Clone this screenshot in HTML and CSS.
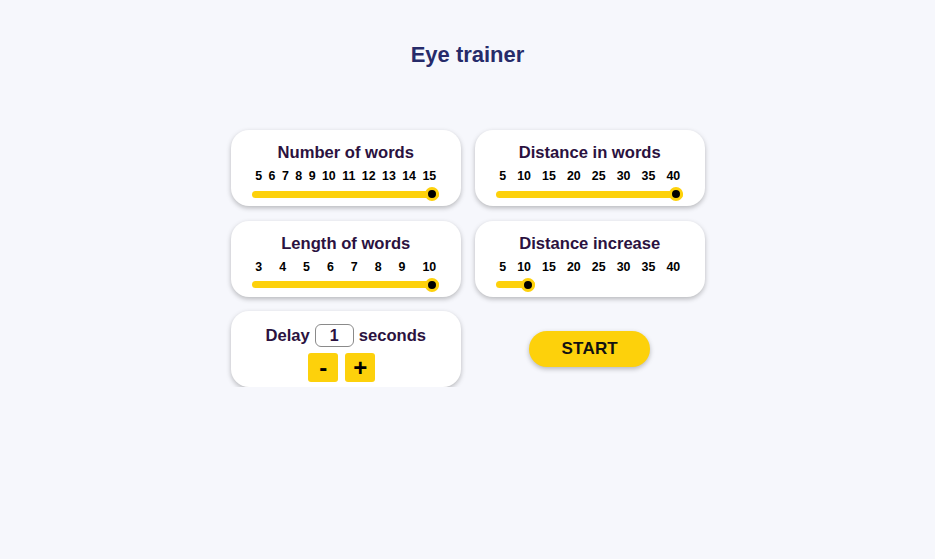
FILE: index.html
```html
<!DOCTYPE html>
<html lang="en">
<head>
<meta charset="utf-8">
<title>Eye trainer</title>
<link rel="stylesheet" href="styles.css">
</head>
<body>
<main class="app">
  <h1 class="app-title">Eye trainer</h1>

  <section class="settings">
    <div class="card">
      <h2 class="card-title">Number of words</h2>
      <div class="slider">
        <div class="ticks"><span>5</span><span>6</span><span>7</span><span>8</span><span>9</span><span>10</span><span>11</span><span>12</span><span>13</span><span>14</span><span>15</span></div>
        <div class="track"><div class="fill" style="width: 100%"><span class="thumb"></span></div></div>
      </div>
    </div>

    <div class="card">
      <h2 class="card-title">Distance in words</h2>
      <div class="slider">
        <div class="ticks"><span>5</span><span>10</span><span>15</span><span>20</span><span>25</span><span>30</span><span>35</span><span>40</span></div>
        <div class="track"><div class="fill" style="width: 100%"><span class="thumb"></span></div></div>
      </div>
    </div>

    <div class="card">
      <h2 class="card-title">Length of words</h2>
      <div class="slider">
        <div class="ticks"><span>3</span><span>4</span><span>5</span><span>6</span><span>7</span><span>8</span><span>9</span><span>10</span></div>
        <div class="track"><div class="fill" style="width: 100%"><span class="thumb"></span></div></div>
      </div>
    </div>

    <div class="card">
      <h2 class="card-title">Distance increase</h2>
      <div class="slider">
        <div class="ticks"><span>5</span><span>10</span><span>15</span><span>20</span><span>25</span><span>30</span><span>35</span><span>40</span></div>
        <div class="track"><div class="fill" style="width: calc(14px + (100% - 14px) / 7)"><span class="thumb"></span></div></div>
      </div>
    </div>

    <div class="card card-delay">
      <div class="delay-row">
        <span>Delay</span>
        <input class="delay-input" type="text" value="1">
        <span>seconds</span>
      </div>
      <div class="delay-buttons">
        <button class="step-btn" type="button">-</button>
        <button class="step-btn" type="button">+</button>
      </div>
    </div>

    <div class="start-cell">
      <button class="start-btn" type="button">START</button>
    </div>
  </section>
</main>
</body>
</html>
```

FILE: styles.css
```css
html, body {
  margin: 0;
  padding: 0;
}

body {
  background: #f6f7fc;
  font-family: "Liberation Sans", Arial, sans-serif;
  color: #000;
}

.app {
  display: flex;
  flex-direction: column;
  align-items: center;
  padding-top: 41px;
}

.app-title {
  margin: 0;
  font-size: 22px;
  line-height: 28px;
  font-weight: 700;
  color: #262b6a;
}

.settings {
  margin-top: 61px;
  margin-left: 0.5px;
  display: grid;
  grid-template-columns: 230px 230px;
  grid-auto-rows: 76px;
  column-gap: 14px;
  row-gap: 14.5px;
}

.card {
  background: #fff;
  border-radius: 18px;
  box-shadow: 0 2px 5px rgba(0, 0, 0, 0.26);
  display: flex;
  flex-direction: column;
  align-items: center;
  padding-top: 13px;
  box-sizing: border-box;
}

.card-title {
  margin: 0;
  font-size: 16.6px;
  line-height: 20px;
  font-weight: 700;
  color: #2b1240;
}

.slider {
  width: 187px;
  margin-top: 5px;
}

.ticks {
  display: flex;
  justify-content: space-between;
  padding: 0 3px;
  font-size: 12.4px;
  line-height: 16px;
  font-weight: 700;
}

.track {
  position: relative;
  height: 14px;
  margin-top: 3px;
}

.fill {
  position: relative;
  top: 3.5px;
  height: 7px;
  border-radius: 4px;
  background: #fdd10b;
}

.thumb {
  position: absolute;
  right: 0;
  top: -3.5px;
  width: 14px;
  height: 14px;
  box-sizing: border-box;
  border-radius: 50%;
  background: #000;
  border: 3.5px solid #fdd10b;
}

.card-delay {
  padding-top: 13px;
}

.delay-row {
  display: flex;
  align-items: center;
  gap: 5px;
  font-size: 16.6px;
  font-weight: 700;
  color: #2b1240;
  line-height: 23px;
}

.delay-input {
  width: 39px;
  height: 23px;
  box-sizing: border-box;
  border: 1px solid #8a8a8a;
  border-radius: 6px;
  text-align: center;
  font-family: inherit;
  font-size: 16px;
  font-weight: 700;
  color: #2b1240;
  padding: 0;
  background: #fff;
}

.delay-buttons {
  display: flex;
  gap: 7px;
  margin-top: 6px;
  margin-right: 8px;
}

.step-btn {
  width: 30px;
  height: 29px;
  border: none;
  border-radius: 3px;
  background: #fdd10b;
  font-family: inherit;
  font-size: 24px;
  font-weight: 700;
  line-height: 29px;
  padding: 0;
  color: #000;
}

.start-cell {
  display: flex;
  justify-content: center;
  align-items: flex-start;
  padding-top: 20px;
}

.start-btn {
  width: 121px;
  height: 36px;
  border: none;
  border-radius: 18px;
  background: #fdd10b;
  box-shadow: 0 2px 5px rgba(0, 0, 0, 0.26);
  font-family: inherit;
  font-size: 17px;
  font-weight: 700;
  color: #111;
  letter-spacing: 0.2px;
  padding: 0;
}
```
